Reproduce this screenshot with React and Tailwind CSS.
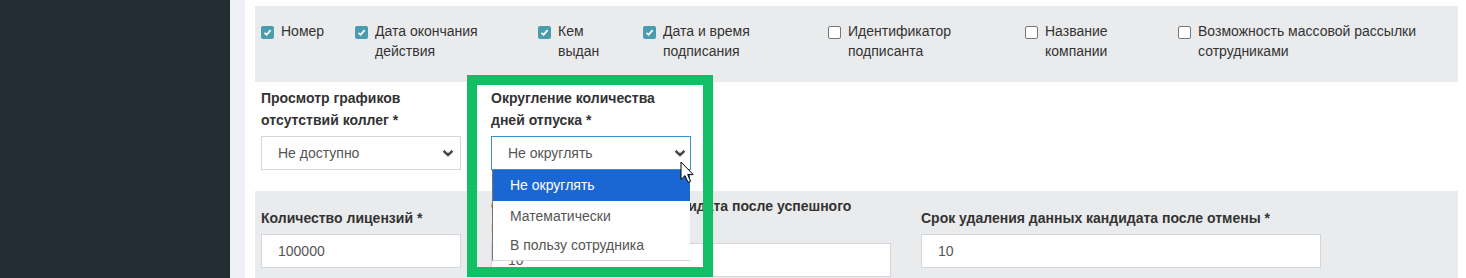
import React from 'react'

const font = "font-['Liberation_Sans',Arial,sans-serif]"

const checks = [
  { w: 'w-[94px]', on: true, text: ['Номер'] },
  { w: 'w-[183px]', on: true, text: ['Дата окончания', 'действия'] },
  { w: 'w-[105px]', on: true, text: ['Кем', 'выдан'] },
  { w: 'w-[185px]', on: true, text: ['Дата и время', 'подписания'] },
  { w: 'w-[197px]', on: false, text: ['Идентификатор', 'подписанта'] },
  { w: 'w-[153px]', on: false, text: ['Название', 'компании'] },
  { w: 'w-[260px]', on: false, text: ['Возможность массовой рассылки', 'сотрудниками'] },
]

const Box = ({ on }) =>
  on ? (
    <span className="mt-[5px] flex h-[13px] w-[13px] shrink-0 items-center justify-center rounded-[2px] bg-[#4b9cae]">
      <svg width="9" height="9" viewBox="0 0 9 9">
        <polyline points="1.5,4.8 3.6,6.8 7.6,2.2" fill="none" stroke="#fff" strokeWidth="1.8" />
      </svg>
    </span>
  ) : (
    <span className="mt-[5px] h-[13px] w-[13px] shrink-0 rounded-[2px] border border-[#767676] bg-white" />
  )

const Chevron = () => (
  <svg width="12" height="8" viewBox="0 0 12 8" className="shrink-0">
    <polyline points="1.5,1.8 6,6 10.5,1.8" fill="none" stroke="#444" strokeWidth="2.4" />
  </svg>
)

const Label = ({ children }) => (
  <div className="text-[14px] font-bold leading-[22px] text-[#333]">{children}</div>
)

const Input = ({ value, w = 'w-[200px]' }) => (
  <div className={`flex h-[34px] ${w} items-center border border-[#d3d6da] bg-white pl-[16px] text-[14px] text-[#555]`}>
    {value}
  </div>
)

const App = () => {
  return (
    <div className={`relative flex h-[278px] w-[1466px] overflow-hidden bg-white ${font}`}>
      <aside className="w-[230px] shrink-0 bg-[#232c33]" />
      <div className="w-[15px] shrink-0 bg-[#edf1f5]" />
      <main className="flex-1 pl-[10px] pr-[8px] pt-[6px]">
        <section className="flex h-[76px] bg-[#eaebed] pl-[6px] pt-[15px]">
          {checks.map((c, i) => (
            <div key={i} className={`flex ${c.w} shrink-0 gap-[7px]`}>
              <Box on={c.on} />
              <div className="text-[14px] leading-[20px] text-[#333]">
                {c.text.map((t, j) => (
                  <div key={j}>{t}</div>
                ))}
              </div>
            </div>
          ))}
        </section>

        <section className="flex h-[109px] gap-[30px] pl-[6px] pt-[5px]">
          <div className="w-[200px]">
            <Label>
              Просмотр графиков
              <br />
              отсутствий коллег *
            </Label>
            <div className="mt-[5px] flex h-[34px] items-center justify-between border border-[#d3d6da] bg-white pl-[16px] pr-[6px] text-[14px] text-[#555]">
              Не доступно
              <Chevron />
            </div>
          </div>
          <div className="w-[200px]">
            <Label>
              Округление количества
              <br />
              дней отпуска *
            </Label>
            <div className="relative mt-[5px]">
              <div className="flex h-[34px] items-center justify-between border border-[#3a8fcc] bg-white pl-[16px] pr-[4px] text-[14px] text-[#555]">
                Не округлять
                <Chevron />
              </div>
              <ul className="absolute left-[1px] top-[34px] z-10 w-[198px] border-b border-l border-[#767676] border-b-[#d8d8d8] bg-white text-[14px] text-[#555]">
                <li className="flex h-[31px] items-center bg-[#1a67d3] pl-[17px] text-white">Не округлять</li>
                <li className="flex h-[30px] items-center pl-[17px]">Математически</li>
                <li className="flex h-[29px] items-center pl-[17px]">В пользу сотрудника</li>
              </ul>
            </div>
          </div>
        </section>

        <section className="flex h-[100px] gap-[30px] bg-[#eaebed] pl-[6px]">
          <div className="w-[200px] pt-[16px]">
            <Label>Количество лицензий *</Label>
            <div className="mt-[5px]">
              <Input value="100000" />
            </div>
          </div>
          <div className="w-[400px] pt-[4px]">
            <Label>
              Срок удаления данных кандидата после успешного
              <br />
              найма *
            </Label>
            <div className="mt-[4px]">
              <Input value="10" w="w-[400px]" />
            </div>
          </div>
          <div className="w-[400px] pt-[16px]">
            <Label>Срок удаления данных кандидата после отмены *</Label>
            <div className="mt-[5px]">
              <Input value="10" w="w-[400px]" />
            </div>
          </div>
        </section>
      </main>

      {/* highlight frame */}
      <div className="pointer-events-none absolute left-[467px] top-[75px] z-20 h-[202px] w-[246px] border-[10px] border-[#13bf66]" />

      {/* mouse pointer */}
      <svg className="absolute left-[680px] top-[161px] z-30" width="15" height="24" viewBox="0 0 15 24">
        <path d="M1 1 L1 18.5 L5 14.6 L8 21.4 L10.6 20.3 L7.7 13.6 L13.2 13.6 Z" fill="#fff" stroke="#000" strokeWidth="1" strokeLinejoin="round" />
      </svg>
    </div>
  )
}

export default App
